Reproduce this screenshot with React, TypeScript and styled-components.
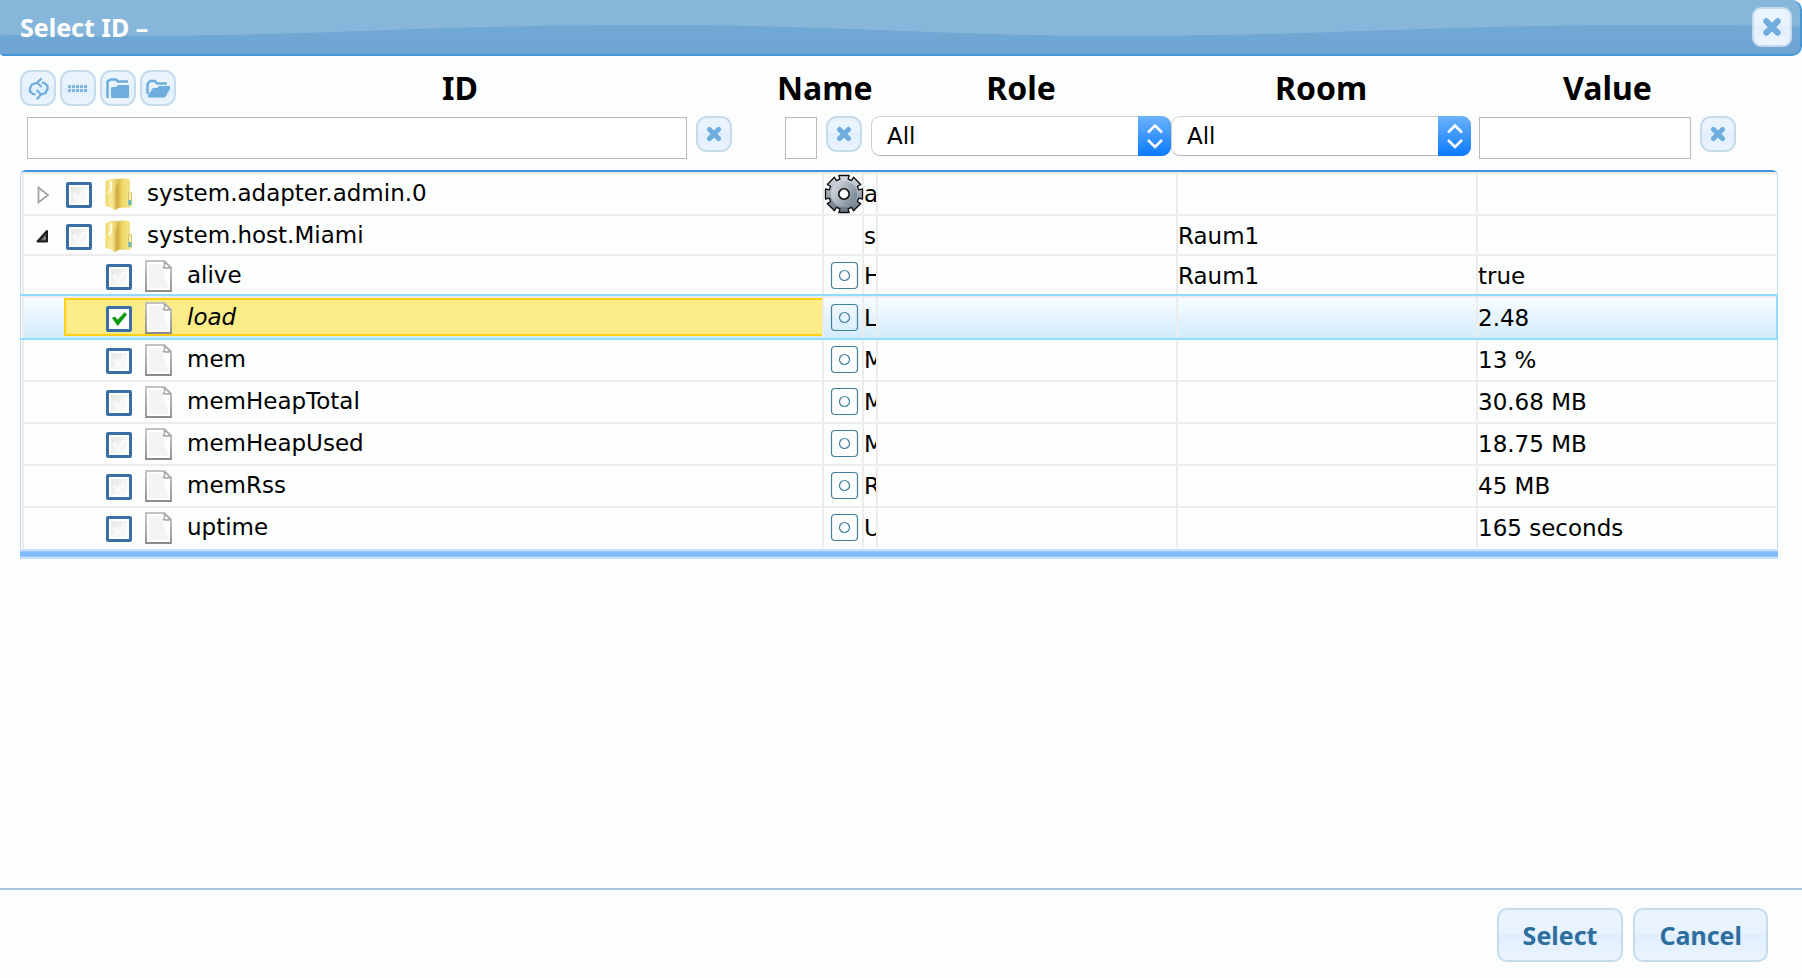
import React from "react";
import styled, { createGlobalStyle, css } from "styled-components";

const GlobalStyle = createGlobalStyle`
  *, *::before, *::after { box-sizing: border-box; }
  body {
    margin: 0;
    background: #fcfdfd;
    color: #000;
    font-family: "DejaVu Sans", sans-serif;
    font-size: 23px;
    line-height: 32px;
  }
  button, input, select { font: inherit; margin: 0; }
`;

const boldFont = css`
  font-family: "Noto Sans", "Open Sans", sans-serif;
  font-weight: 700;
`;

const glass = css`
  background: linear-gradient(#ebf4fd 0%, #e8f3fe 46%, #dfeeff 50%, #ecf5fe 100%);
  border: 2px solid #c5dbec;
`;

const Dialog = styled.div`
  display: flex;
  flex-direction: column;
  min-height: 100vh;
`;

const TitleBar = styled.header`
  position: relative;
  display: flex;
  align-items: center;
  justify-content: space-between;
  height: 56px;
  padding: 0 8px 0 20px;
  overflow: hidden;
  background: #87b6db;
  border: solid #4297d7;
  border-width: 0 2px 2px 0;
  border-radius: 0 10px 10px 4px;
`;

const WaveSvg = styled.svg`
  position: absolute;
  inset: 0;
  width: 100%;
  height: 100%;
`;

const Title = styled.h1`
  ${boldFont}
  position: relative;
  margin: 0;
  color: #fff;
  font-size: 25px;
  line-height: 32px;
`;

const IconButton = styled.button<{ $size?: number; $radius?: number }>`
  ${glass}
  position: relative;
  display: flex;
  flex: none;
  align-items: center;
  justify-content: center;
  width: ${(p) => p.$size ?? 36}px;
  height: ${(p) => p.$size ?? 36}px;
  padding: 0;
  border-radius: ${(p) => p.$radius ?? 11}px;
  color: #6eaddc;
`;

const Content = styled.main`
  flex: 1;
  padding: 12px 24px 24px 20px;
`;

const Filters = styled.div`
  display: grid;
  grid-template-columns: minmax(0, 1fr) 135px 300px 300px 307px;
`;

const HeadCell = styled.div<{ $left?: number; $right?: number }>`
  display: flex;
  align-items: center;
  height: 40px;
  padding: 0 ${(p) => p.$right ?? 0}px 0 ${(p) => p.$left ?? 0}px;
`;

const Heading = styled.h2`
  ${boldFont}
  flex: 1;
  display: flex;
  justify-content: center;
  margin: 0;
  font-size: 32px;
  line-height: 40px;
`;

const Toolbar = styled.div`
  display: flex;
  gap: 4px;
  margin-right: 8px;
`;

const FilterCell = styled.div<{ $left?: number; $right?: number }>`
  display: flex;
  align-items: flex-start;
  gap: 9px;
  height: 54px;
  padding: 8px ${(p) => p.$right ?? 0}px 0 ${(p) => p.$left ?? 0}px;
  margin-bottom: 8px;
`;

const FilterInput = styled.input`
  flex: 1;
  min-width: 0;
  height: 42px;
  margin-top: 1px;
  padding: 0 6px;
  background: #fff;
  border: 1px solid #b9b9b9;
  border-radius: 0;
`;

const SelectWrap = styled.div`
  position: relative;
  flex: 1;
`;

const SelectBox = styled.select`
  appearance: none;
  display: block;
  width: 100%;
  height: 40px;
  padding: 0 40px 0 15px;
  color: #000;
  background: #fff;
  border: 1px solid #cfcfcf;
  border-bottom-color: #b4b4b4;
  border-radius: 9px;
`;

const Stepper = styled.span`
  position: absolute;
  top: 0;
  right: 0;
  display: flex;
  align-items: center;
  justify-content: center;
  width: 33px;
  height: 40px;
  pointer-events: none;
  background: linear-gradient(#6cb3fa, #0a7aff);
  border-radius: 0 9px 9px 0;
`;

const TableFrame = styled.div`
  padding: 0 1px;
  border: solid #c0dcf5;
  border-width: 2px 1px 0;
  border-top-color: #4294e0;
  border-radius: 6px 6px 0 0;
`;

const BottomEdge = styled.div`
  height: 10px;
  margin-top: 1px;
  background: linear-gradient(
    #c5e0ff 0 2px,
    #9ccafd 2px 3px,
    #80b9fc 3px 7px,
    #9ccafd 7px 8px,
    #c5e0ff 8px
  );
`;

const Table = styled.table`
  width: 100%;
  table-layout: fixed;
  border-collapse: separate;
  border-spacing: 0;
  border: solid #ececec;
  border-width: 2px 0 0 2px;
`;

const Cell = styled.td<{ $clip?: boolean }>`
  padding: 0;
  vertical-align: top;
  white-space: nowrap;
  overflow: ${(p) => (p.$clip ? "hidden" : "visible")};
  border: solid #ececec;
  border-width: 0 2px 2px 0;
  &:last-child { border-right: 0; }
`;

const Row = styled.tr<{ $height: number; $active?: boolean }>`
  height: ${(p) => p.$height}px;
  &:last-child > td { border-bottom: 0; }
  ${(p) =>
    p.$active &&
    css`
      position: relative;
      > td {
        border-top-width: 2px;
        background: linear-gradient(#f8fcff, #d2ecfc) padding-box;
      }
      > td:first-child::after {
        content: "";
        position: absolute;
        inset: -2px -2px 0 -4px;
        border: 2px solid #94dcff;
        border-left: 0;
        pointer-events: none;
      }
    `}
`;

const Node = styled.div<{ $child?: boolean; $selected?: boolean }>`
  display: flex;
  align-items: center;
  gap: 8px;
  height: 38px;
  margin-left: ${(p) => (p.$child ? 40 : 0)}px;
  padding: 4px 0 0 5px;
  border: 2px solid transparent;
  border-right: 0;
  ${(p) =>
    p.$selected &&
    css`
      background: #fbec88;
      border-color: #fcd113;
      font-style: italic;
    `}
`;

const Expander = styled.svg`
  flex: none;
  width: 24px;
  height: 24px;
`;

const NodeIcon = styled.svg`
  flex: none;
  width: 32px;
  height: 32px;
  margin-top: -2px;
`;

const NodeCheck = styled.input`
  appearance: none;
  position: relative;
  flex: none;
  width: 26px;
  height: 26px;
  margin: 0 3px;
  background: linear-gradient(135deg, #e6e6e3, #fdfdfd) content-box, #fff;
  border: 3px solid #3a6fa5;
  border-radius: 2px;
  padding: 2px;
  &::before {
    content: "";
    position: absolute;
    inset: 3px 2px 3px 3px;
    background: #f9f9f8;
    clip-path: polygon(0 42%, 18% 32%, 38% 56%, 84% 2%, 100% 18%, 38% 100%);
  }
  &:checked { background: #fbfbfb; }
  &:checked::before { background: #0d9a0d; }
`;

const NodeLabel = styled.label`
  padding-left: 4px;
  margin-top: -5px;
`;

const CellText = styled.div`
  height: 38px;
  padding-top: 4px;
`;

const ObjectIcon = styled.svg`
  display: block;
  width: 40px;
  height: 40px;
`;

const StateSlot = styled.div`
  height: 38px;
`;

const Footer = styled.footer`
  display: flex;
  justify-content: flex-end;
  gap: 10px;
  height: 90px;
  padding: 18px 34px 0;
  border-top: 2px solid #a6c9e2;
`;

const TextButton = styled.button`
  ${glass}
  && {
    ${boldFont}
    font-size: 25px;
  }
  height: 54px;
  padding: 0 24px;
  border-radius: 10px;
  color: #2e6e9e;
`;

const Wave = () => (
  <WaveSvg viewBox="0 0 1800 54" preserveAspectRatio="none" aria-hidden="true">
    <defs>
      <linearGradient id="wave" x1="0" y1="24" x2="0" y2="54" gradientUnits="userSpaceOnUse">
        <stop offset="0" stopColor="#72a9d3" />
        <stop offset="1" stopColor="#6ea3d3" />
      </linearGradient>
    </defs>
    <path
      fill="url(#wave)"
      d="M0 34.5C40 35.500 80 36 130 36C310 36 420 25 650 25C850 25 930 36 1130 36C1310 36 1430 25 1660 25C1720 25 1760 25.500 1800 26.500V54H0Z"
    />
  </WaveSvg>
);

const CrossIcon = ({ size = 16 }: { size?: number }) => (
  <svg width={size} height={size} viewBox="0 0 16 16" aria-hidden="true">
    <path d="M3.500 3.500L12.500 12.500M12.500 3.500L3.500 12.500" stroke="currentColor" strokeWidth="5" strokeLinecap="round" />
  </svg>
);

const RefreshIcon = () => (
  <svg width="24" height="24" viewBox="0 0 24 24" fill="none" stroke="currentColor" strokeWidth="2.200" aria-hidden="true">
    <path d="M15.700 2.300L11 6.700L15.700 11M11 6.700L6 8.500L4 12V15.500L7 18L9.700 18.500" />
    <path d="M10.700 14L15 18.500L10.700 23.300M15 18.500L19.500 17L21.500 13V10L18.500 7L16 6.700" />
  </svg>
);

const DotsIcon = () => (
  <svg width="24" height="24" viewBox="0 0 24 24" fill="currentColor" aria-hidden="true">
    {[2, 6, 10, 14, 18].map((x) => (
      <React.Fragment key={x}>
        <rect x={x} y="9" width="3" height="3" opacity="0.850" />
        <rect x={x} y="13" width="3" height="3" opacity="0.850" />
      </React.Fragment>
    ))}
  </svg>
);

const FolderClosedIcon = () => (
  <svg width="26" height="24" viewBox="0 0 26 24" aria-hidden="true">
    <path d="M2.500 22V6Q2.500 4.500 4 4.500L6 3.500H11L13 5.500H23" fill="none" stroke="currentColor" strokeWidth="2.500" />
    <path d="M6 12.500Q6 11 7.500 11H11L13 9H24V20.500Q24 22 22.500 22H7.500Q6 22 6 20.500Z" fill="currentColor" />
  </svg>
);

const FolderOpenIcon = () => (
  <svg width="26" height="24" viewBox="0 0 26 24" aria-hidden="true">
    <path d="M2.500 18V8L5 5H10L12 7.500H22" fill="none" stroke="currentColor" strokeWidth="2.500" />
    <path d="M8 12H12L14 10H25V13L20 21.500H3.500L2.500 20Z" fill="currentColor" />
  </svg>
);

const ChevronsIcon = () => (
  <svg width="18" height="26" viewBox="0 0 18 26" fill="none" stroke="#fff" strokeWidth="2.500" aria-hidden="true">
    <path d="M2 9.500L9 2.500L16 9.500M2 17L9 24L16 17" />
  </svg>
);

const ExpanderIcon = ({ state }: { state?: "open" | "closed" }) => (
  <Expander viewBox="0 0 24 24" aria-hidden="true">
    {state === "closed" && <path d="M7.500 4.500L17 12L7.500 19.500Z" fill="#fdfdfd" stroke="#a2a2a2" strokeWidth="1.800" />}
    {state === "open" && (
      <>
        <path d="M16 6V16.500H6.500Z" fill="#555" stroke="#1c1c1c" strokeWidth="2" strokeLinejoin="round" />
        <path d="M14.500 11.500V14.500H11.500Z" fill="#a5a5a5" />
      </>
    )}
  </Expander>
);

const FolderIcon = () => (
  <NodeIcon viewBox="0 0 32 32" aria-hidden="true">
    <defs>
      <linearGradient id="folderBack" x1="0" x2="1">
        <stop offset="0" stopColor="#c9a53d" />
        <stop offset="0.450" stopColor="#efd968" />
        <stop offset="1" stopColor="#f6e68c" />
      </linearGradient>
      <linearGradient id="folderFront" x1="0" x2="1">
        <stop offset="0" stopColor="#efd76a" />
        <stop offset="0.400" stopColor="#f9eb9a" />
        <stop offset="1" stopColor="#dcbb49" />
      </linearGradient>
    </defs>
    <path d="M13 1.500Q20 0 26 1L27 2V15L29 16V27L27.500 29.500L12 30Z" fill="url(#folderBack)" />
    <path d="M2.500 4Q3 2 6 1.500L12 0.500L16 3V29L13.500 32H11L9 30L2.500 28Z" fill="url(#folderFront)" />
    <path d="M8 3.500V12L5.500 15" fill="none" stroke="#fffbe0" strokeWidth="2" />
    <path d="M12 10L16 3V29L12 31Z" fill="#c9a33a" opacity="0.550" />
    <path d="M25.500 15H28.500V27H25.500Z" fill="#f7f0cc" stroke="#dcbf5a" />
    <rect x="25.500" y="22" width="2.500" height="5" fill="#4fbde4" />
  </NodeIcon>
);

const DocumentIcon = () => (
  <NodeIcon viewBox="0 0 32 32" aria-hidden="true">
    <defs>
      <linearGradient id="docEdge" x1="0" y1="0" x2="0" y2="1">
        <stop offset="0" stopColor="#c2c2c0" />
        <stop offset="1" stopColor="#8b8b89" />
      </linearGradient>
    </defs>
    <path d="M3 1H21.500L28 7.500V31H3Z" fill="#fff" stroke="url(#docEdge)" strokeWidth="1.800" />
    <path d="M6 4H19L25 26V28H6Z" fill="#f4f5f2" />
    <path d="M21 1.500Q22.500 5 20.500 7.500Q24 8.500 27.500 7.500Z" fill="#fff" stroke="#a8a8a6" strokeWidth="1.400" />
  </NodeIcon>
);

const gearPath = (() => {
  const teeth = 8;
  const pts: string[] = [];
  for (let i = 0; i < teeth; i++) {
    const mid = (i * 2 * Math.PI) / teeth - Math.PI / 2;
    [
      [-0.27, 15.4],
      [-0.27, 19.2],
      [0.27, 19.2],
      [0.27, 15.4],
    ].forEach(([a, r]) => {
      pts.push(`${(20 + r * Math.cos(mid + a)).toFixed(1)} ${(20 + r * Math.sin(mid + a)).toFixed(1)}`);
    });
  }
  return `M${pts.join("L")}Z`;
})();

const GearIcon = () => (
  <ObjectIcon viewBox="0 0 40 40" aria-hidden="true">
    <defs>
      <linearGradient id="gearOuter" x1="0" y1="0" x2="0" y2="1">
        <stop offset="0" stopColor="#dde1e6" />
        <stop offset="1" stopColor="#64727f" />
      </linearGradient>
      <linearGradient id="gearInner" x1="0" y1="0" x2="1" y2="0.600">
        <stop offset="0" stopColor="#dfe2e7" />
        <stop offset="1" stopColor="#7c8b99" />
      </linearGradient>
    </defs>
    <path d={gearPath} fill="url(#gearOuter)" stroke="#0c0c0c" strokeWidth="1.300" strokeLinejoin="round" />
    <circle cx="20" cy="20" r="13" fill="url(#gearInner)" />
    <circle cx="20" cy="20" r="5.200" fill="#fff" stroke="#0c0c0c" strokeWidth="1.600" />
  </ObjectIcon>
);

const StateIcon = () => (
  <ObjectIcon viewBox="0 0 40 40" fill="none" stroke="#44809c" aria-hidden="true">
    <rect x="7.500" y="6.500" width="26" height="26" rx="3.500" strokeWidth="1.200" />
    <circle cx="20.500" cy="19.500" r="5" strokeWidth="1.200" />
  </ObjectIcon>
);

interface Item {
  id: string;
  height: number;
  name: string;
  room?: string;
  value?: string;
  expander?: "open" | "closed";
  icon?: "gear" | "state";
  selected?: boolean;
}

const items: Item[] = [
  { id: "system.adapter.admin.0", height: 42, name: "a", expander: "closed", icon: "gear" },
  { id: "system.host.Miami", height: 40, name: "s", room: "Raum1", expander: "open" },
  { id: "alive", height: 40, name: "H", room: "Raum1", value: "true", icon: "state" },
  { id: "load", height: 44, name: "L", value: "2.48", icon: "state", selected: true },
  { id: "mem", height: 42, name: "M", value: "13 %", icon: "state" },
  { id: "memHeapTotal", height: 42, name: "M", value: "30.68 MB", icon: "state" },
  { id: "memHeapUsed", height: 42, name: "M", value: "18.75 MB", icon: "state" },
  { id: "memRss", height: 42, name: "R", value: "45 MB", icon: "state" },
  { id: "uptime", height: 40, name: "U", value: "165 seconds", icon: "state" },
];

const ClearButton = ({ label }: { label: string }) => (
  <IconButton type="button" aria-label={label}>
    <CrossIcon />
  </IconButton>
);

const FilterSelect = ({ label }: { label: string }) => (
  <SelectWrap>
    <SelectBox aria-label={label} defaultValue="all">
      <option value="all">All</option>
    </SelectBox>
    <Stepper>
      <ChevronsIcon />
    </Stepper>
  </SelectWrap>
);

const TreeRow = ({ item }: { item: Item }) => {
  const isChild = !item.expander;
  return (
    <Row $height={item.height} $active={item.selected}>
      <Cell>
        <Node $child={isChild} $selected={item.selected}>
          <ExpanderIcon state={item.expander} />
          <NodeCheck type="checkbox" id={`node-${item.id}`} defaultChecked={item.selected} />
          {isChild ? <DocumentIcon /> : <FolderIcon />}
          <NodeLabel htmlFor={`node-${item.id}`}>{item.id}</NodeLabel>
        </Node>
      </Cell>
      <Cell>
        {item.icon === "gear" && <GearIcon />}
        {item.icon === "state" && (
          <StateSlot>
            <StateIcon />
          </StateSlot>
        )}
      </Cell>
      <Cell $clip>
        <CellText>{item.name}</CellText>
      </Cell>
      <Cell />
      <Cell>
        <CellText>{item.room}</CellText>
      </Cell>
      <Cell>
        <CellText>{item.value}</CellText>
      </Cell>
    </Row>
  );
};

export default function App() {
  return (
    <Dialog role="dialog" aria-labelledby="dialog-title">
      <GlobalStyle />
      <TitleBar>
        <Wave />
        <Title id="dialog-title">Select ID –</Title>
        <IconButton type="button" $size={40} $radius={9} aria-label="Close">
          <CrossIcon size={20} />
        </IconButton>
      </TitleBar>
      <Content>
        <Filters>
          <HeadCell>
            <Toolbar>
              <IconButton type="button" aria-label="Refresh"><RefreshIcon /></IconButton>
              <IconButton type="button" aria-label="Toggle list view"><DotsIcon /></IconButton>
              <IconButton type="button" aria-label="Collapse all"><FolderClosedIcon /></IconButton>
              <IconButton type="button" aria-label="Expand all"><FolderOpenIcon /></IconButton>
            </Toolbar>
            <Heading>ID</Heading>
          </HeadCell>
          <HeadCell $left={41}><Heading>Name</Heading></HeadCell>
          <HeadCell><Heading>Role</Heading></HeadCell>
          <HeadCell><Heading>Room</Heading></HeadCell>
          <HeadCell $left={8} $right={42}><Heading>Value</Heading></HeadCell>
          <FilterCell $left={7} $right={4}>
            <FilterInput type="text" aria-label="Filter by ID" />
            <ClearButton label="Clear ID filter" />
          </FilterCell>
          <FilterCell $left={49} $right={9}>
            <FilterInput type="text" aria-label="Filter by name" />
            <ClearButton label="Clear name filter" />
          </FilterCell>
          <FilterCell><FilterSelect label="Role" /></FilterCell>
          <FilterCell><FilterSelect label="Room" /></FilterCell>
          <FilterCell $left={8} $right={42}>
            <FilterInput type="text" aria-label="Filter by value" />
            <ClearButton label="Clear value filter" />
          </FilterCell>
        </Filters>
        <TableFrame>
          <Table>
            <colgroup>
              <col />
              <col width="40" />
              <col width="14" />
              <col width="300" />
              <col width="300" />
              <col width="298" />
            </colgroup>
            <tbody>
              {items.map((item) => (
                <TreeRow key={item.id} item={item} />
              ))}
            </tbody>
          </Table>
        </TableFrame>
        <BottomEdge />
      </Content>
      <Footer>
        <TextButton type="button">Select</TextButton>
        <TextButton type="button">Cancel</TextButton>
      </Footer>
    </Dialog>
  );
}
